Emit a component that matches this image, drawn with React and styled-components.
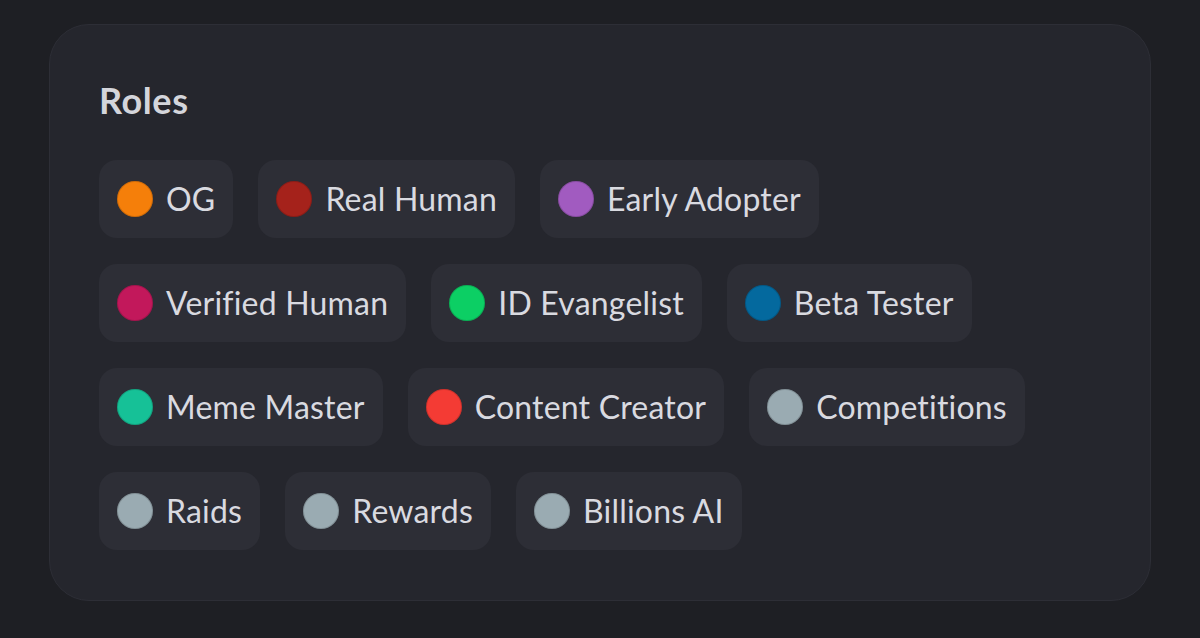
import React from "react";
import styled, { createGlobalStyle } from "styled-components";

const GlobalStyle = createGlobalStyle`
  html, body {
    margin: 0;
    padding: 0;
    background: #1e1f24;
  }
  body {
    font-family: Lato, "Noto Sans", sans-serif;
  }
`;

const Page = styled.div`
  width: 1200px;
  height: 638px;
  box-sizing: border-box;
  padding: 24px 49px 38px;
  background: #1e1f24;
`;

const Card = styled.section`
  box-sizing: border-box;
  height: 577px;
  padding: 55px 50px 50px 49px;
  background: #25262d;
  border: 1px solid #2d2e36;
  border-radius: 40px;
`;

const Title = styled.h2`
  margin: 0 0 40px;
  font-size: 36px;
  line-height: 40px;
  font-weight: 700;
  color: #d4d5db;
  letter-spacing: 0.6px;
`;

const RoleList = styled.div`
  display: flex;
  flex-wrap: wrap;
  column-gap: 25px;
  row-gap: 26px;
`;

const Chip = styled.div`
  display: flex;
  align-items: center;
  gap: 13px;
  height: 78px;
  box-sizing: border-box;
  padding: 0 18px 0 18px;
  background: #2d2e36;
  border-radius: 18px;
`;

const Dot = styled.span`
  width: 36px;
  height: 36px;
  flex-shrink: 0;
  border-radius: 50%;
  background: ${(p) => p.$color};
  box-shadow: inset 0 0 0 1px rgba(0, 0, 0, 0.15);
`;

const Label = styled.span`
  font-size: 32px;
  line-height: 40px;
  color: #d9dae0;
  letter-spacing: 0.2px;
  white-space: nowrap;
`;

const roles = [
  { name: "OG", color: "#f57f0a" },
  { name: "Real Human", color: "#a5221b" },
  { name: "Early Adopter", color: "#a15bc0" },
  { name: "Verified Human", color: "#c2185b" },
  { name: "ID Evangelist", color: "#0ccf64" },
  { name: "Beta Tester", color: "#04699e" },
  { name: "Meme Master", color: "#16c197" },
  { name: "Content Creator", color: "#f43b34" },
  { name: "Competitions", color: "#9aabb2" },
  { name: "Raids", color: "#9aabb2" },
  { name: "Rewards", color: "#9aabb2" },
  { name: "Billions AI", color: "#9aabb2" },
];

export default function App() {
  return (
    <>
      <GlobalStyle />
      <Page>
        <Card>
          <Title>Roles</Title>
          <RoleList>
            {roles.map((role) => (
              <Chip key={role.name}>
                <Dot $color={role.color} />
                <Label>{role.name}</Label>
              </Chip>
            ))}
          </RoleList>
        </Card>
      </Page>
    </>
  );
}
